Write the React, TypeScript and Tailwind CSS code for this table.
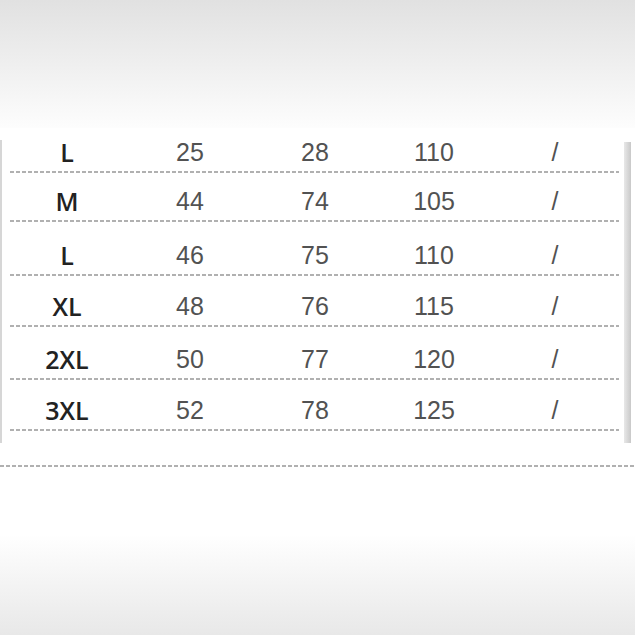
import React from 'react';

type Row = { size: string; a: string; b: string; c: string; h: string };

const rows: Row[] = [
  { size: 'L', a: '25', b: '28', c: '110', h: 'h-[45px]' },
  { size: 'M', a: '44', b: '74', c: '105', h: 'h-[49px]' },
  { size: 'L', a: '46', b: '75', c: '110', h: 'h-[54px]' },
  { size: 'XL', a: '48', b: '76', c: '115', h: 'h-[51px]' },
  { size: '2XL', a: '50', b: '77', c: '120', h: 'h-[53px]' },
  { size: '3XL', a: '52', b: '78', c: '125', h: 'h-[51px]' },
];

const num = "text-center text-[25px] leading-none text-[#525252] font-['Liberation_Sans',Arial,sans-serif]";

const Dashed = ({ className = '' }: { className?: string }) => (
  <div
    className={`h-[2px] bg-[repeating-linear-gradient(90deg,#8f8f8f_0px,#8f8f8f_4px,transparent_4px,transparent_6px)] opacity-70 ${className}`}
  />
);

export default function App() {
  return (
    <div className="w-[635px] h-[635px] flex flex-col bg-white overflow-hidden">
      {/* top fade */}
      <div className="h-[128px] bg-gradient-to-b from-[#e1e1e1] to-[#fdfdfd]" />

      {/* size table */}
      <div className="h-[315px] flex bg-white">
        <div className="w-[2px] mt-[12px] bg-[#d6d6d6]" />
        <div className="flex-1 flex flex-col">
          {rows.map((r, i) => (
            <div key={i} className={`${r.h} flex flex-col`}>
              <div className="flex-1 flex items-end pb-[6px]">
                <div className="w-[130px] text-center text-[25px] leading-none font-semibold text-[#222222] font-['Open_Sans',sans-serif]">
                  {r.size}
                </div>
                <div className={`w-[116px] ${num}`}>{r.a}</div>
                <div className={`w-[134px] ${num}`}>{r.b}</div>
                <div className={`w-[104px] ${num}`}>{r.c}</div>
                <div className={`flex-1 ${num} text-[#5a5a5a]`}>/</div>
              </div>
              <Dashed className="ml-[8px] mr-[5px]" />
            </div>
          ))}
        </div>
        <div className="w-[7px] mt-[14px] bg-gradient-to-r from-[#e8e8e8] to-[#c9c9c9]" />
        <div className="w-[4px]" />
      </div>

      {/* lower band */}
      <div className="h-[22px] bg-white" />
      <Dashed />
      <div className="flex-1 bg-gradient-to-b from-white from-40% to-[#e8e8e8]" />
    </div>
  );
}
